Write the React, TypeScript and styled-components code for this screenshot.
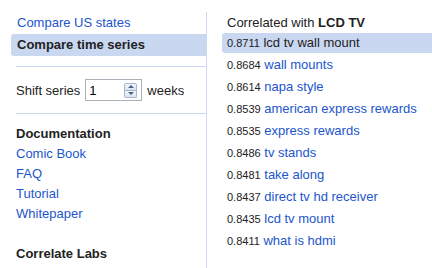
import styled, { createGlobalStyle } from "styled-components"

const GlobalStyle = createGlobalStyle`
  body {
    margin: 0;
    background: #fff;
    font-family: "Liberation Sans", Arial, sans-serif;
    font-size: 13px;
    color: #222;
  }
`

const LINK = "#2255cc"
const PALE = "#c9d7f1"

const correlations = [
  { score: "0.8711", term: "lcd tv wall mount" },
  { score: "0.8684", term: "wall mounts" },
  { score: "0.8614", term: "napa style" },
  { score: "0.8539", term: "american express rewards" },
  { score: "0.8535", term: "express rewards" },
  { score: "0.8486", term: "tv stands" },
  { score: "0.8481", term: "take along" },
  { score: "0.8437", term: "direct tv hd receiver" },
  { score: "0.8435", term: "lcd tv mount" },
  { score: "0.8411", term: "what is hdmi" },
]

const docs = ["Comic Book", "FAQ", "Tutorial", "Whitepaper"]

const Page = styled.div`
  display: flex;
  align-items: stretch;
  height: 268px;
  overflow: hidden;
`

const Sidebar = styled.div`
  width: 195px;
  padding-left: 11px;
  margin-top: 12px;
  border-right: 1px solid ${PALE};
`

const NavItem = styled.div<{ $active?: boolean }>`
  height: 22px;
  line-height: 22px;
  padding-left: 6px;
  border-radius: 3px 0 0 3px;
  background: ${({ $active }) => ($active ? PALE : "transparent")};
  color: ${({ $active }) => ($active ? "#222" : LINK)};
  font-weight: ${({ $active }) => ($active ? "bold" : "normal")};
`

const Divider = styled.div<{ $top?: number }>`
  height: 1px;
  margin-left: 5px;
  margin-top: ${({ $top }) => $top ?? 0}px;
  background: ${PALE};
`

const ShiftRow = styled.div`
  display: flex;
  align-items: center;
  padding: 12px 0 12px 5px;
`

const NumberBox = styled.div`
  display: flex;
  align-items: center;
  box-sizing: border-box;
  width: 57px;
  height: 22px;
  margin: 0 5px 0 5px;
  padding: 0 4px 0 3px;
  border: 1px solid #a9b0b8;
  color: #000;
`

const BoxValue = styled.span`
  flex: 1;
`

const Spinner = styled.div`
  display: flex;
  flex-direction: column;
  width: 13px;
  height: 15px;
`

const SpinButton = styled.div<{ $down?: boolean }>`
  flex: 1;
  display: flex;
  align-items: center;
  justify-content: center;
  box-sizing: border-box;
  border: 1px solid #a7b6cc;
  border-top-width: ${({ $down }) => ($down ? 0 : 1)}px;
  border-radius: ${({ $down }) => ($down ? "0 0 2px 2px" : "2px 2px 0 0")};
  background: linear-gradient(#f4f7fb, #d9e3f1);
`

const Arrow = styled.span<{ $down?: boolean }>`
  width: 0;
  height: 0;
  border-left: 3px solid transparent;
  border-right: 3px solid transparent;
  ${({ $down }) =>
    $down ? "border-top: 3px solid #4a5f86;" : "border-bottom: 3px solid #4a5f86;"}
`

const Section = styled.div`
  padding: 10px 0 0 5px;
`

const Heading = styled.div<{ $gap?: number }>`
  line-height: 20px;
  font-weight: bold;
  margin-top: ${({ $gap }) => $gap ?? 0}px;
`

const DocLink = styled.div`
  line-height: 20px;
  color: ${LINK};
`

const Results = styled.div`
  flex: 1;
  margin-top: 12px;
  padding: 1px 0 0 15px;
`

const ResultsTitle = styled.div`
  line-height: 20px;
  padding-left: 5px;
  b {
    font-weight: bold;
  }
`

const ResultRow = styled.div<{ $active?: boolean }>`
  height: 20px;
  line-height: 20px;
  margin-bottom: 2px;
  padding-left: 5px;
  border-radius: 3px 0 0 3px;
  white-space: nowrap;
  background: ${({ $active }) => ($active ? PALE : "transparent")};
`

const Score = styled.span`
  font-size: 11px;
  color: #222;
`

const Term = styled.span<{ $active?: boolean }>`
  color: ${({ $active }) => ($active ? "#222" : LINK)};
`

export default function App() {
  return (
    <>
      <GlobalStyle />
      <Page>
        <Sidebar>
          <NavItem>Compare US states</NavItem>
          <NavItem $active>Compare time series</NavItem>
          <Divider $top={10} />
          <ShiftRow>
            Shift series
            <NumberBox>
              <BoxValue>1</BoxValue>
              <Spinner>
                <SpinButton>
                  <Arrow />
                </SpinButton>
                <SpinButton $down>
                  <Arrow $down />
                </SpinButton>
              </Spinner>
            </NumberBox>
            weeks
          </ShiftRow>
          <Divider />
          <Section>
            <Heading>Documentation</Heading>
            {docs.map((d) => (
              <DocLink key={d}>{d}</DocLink>
            ))}
            <Heading $gap={20}>Correlate Labs</Heading>
          </Section>
        </Sidebar>
        <Results>
          <ResultsTitle>
            Correlated with <b>LCD TV</b>
          </ResultsTitle>
          {correlations.map((c, i) => (
            <ResultRow key={c.term} $active={i === 0}>
              <Score>{c.score}</Score> <Term $active={i === 0}>{c.term}</Term>
            </ResultRow>
          ))}
        </Results>
      </Page>
    </>
  )
}
